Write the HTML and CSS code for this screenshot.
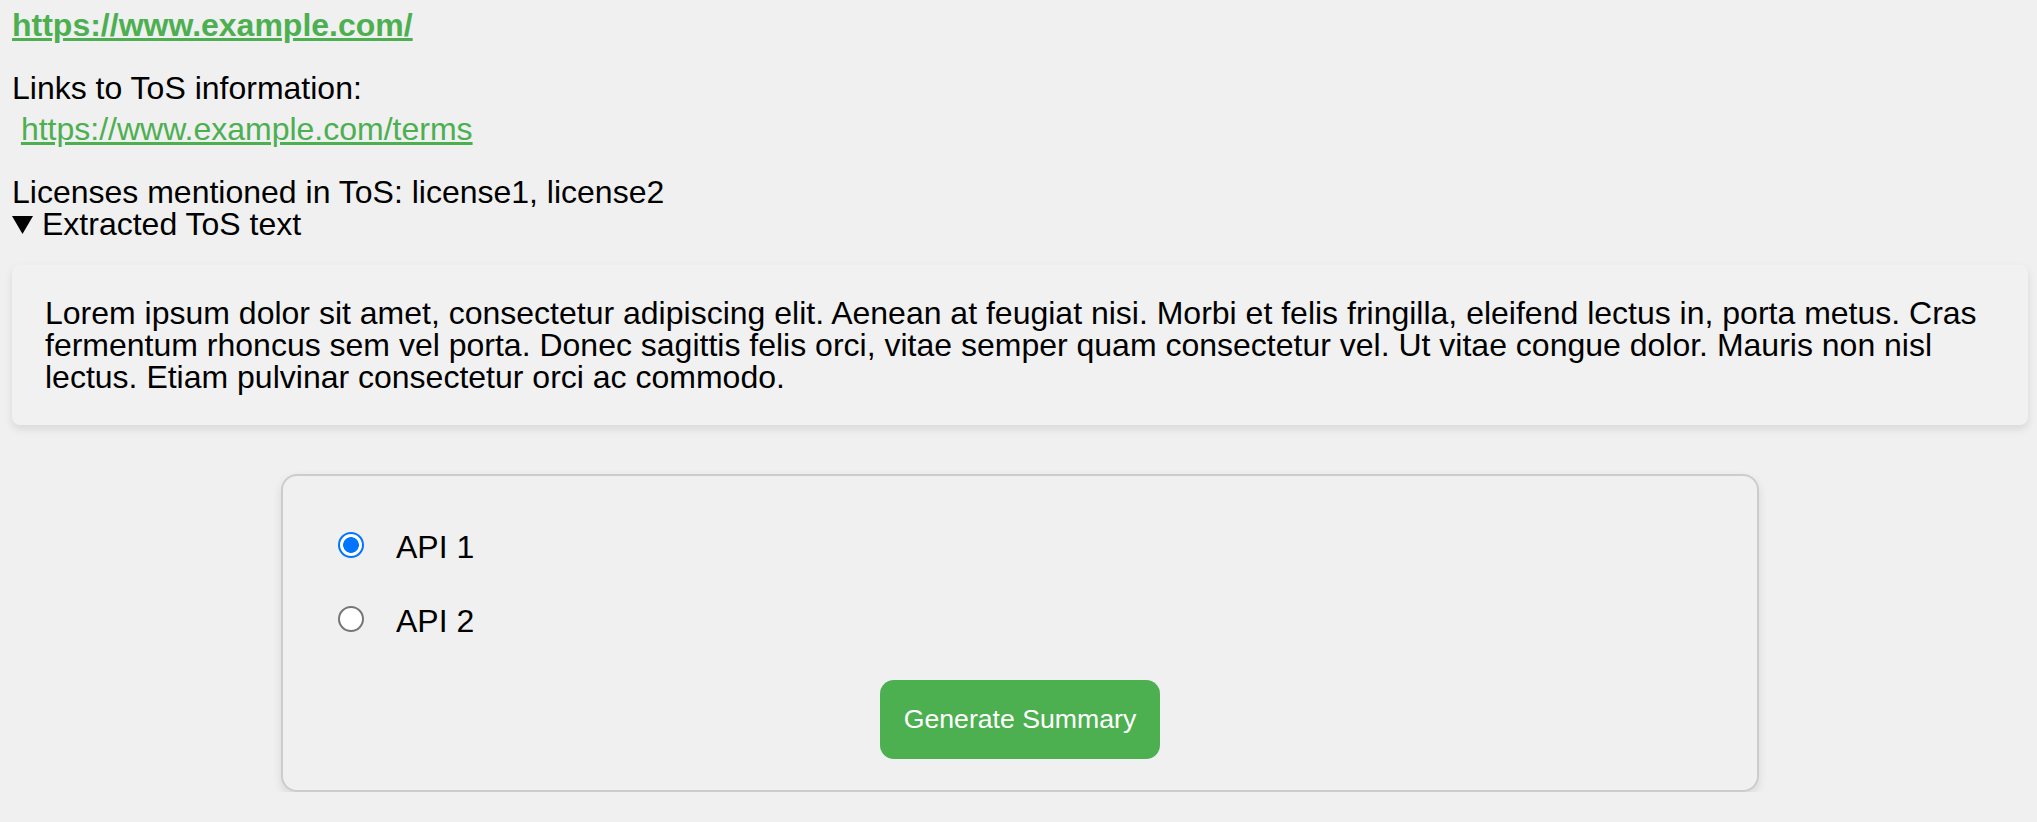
FILE: index.html
```html
<!DOCTYPE html>
<html lang="en">
<head>
<meta charset="utf-8">
<title>ToS Summary</title>
<link rel="stylesheet" href="styles.css">
</head>
<body>
<div class="page">
  <a class="site-link" href="#">https://www.example.com/</a>
  <div class="links-block">
    <div class="line">Links to ToS information:</div>
    <div class="line terms-line">&nbsp;<a class="terms-link" href="#">https://www.example.com/terms</a></div>
  </div>
  <div class="licenses">
    <div class="line">Licenses mentioned in ToS: license1, license2</div>
    <div class="line summary"><svg class="marker" width="21" height="18" viewBox="0 0 21 18"><polygon points="0,0 21,0 10.5,18" fill="#000"/></svg><span>Extracted ToS text</span></div>
  </div>
  <div class="tos-box">Lorem ipsum dolor sit amet, consectetur adipiscing elit. Aenean at feugiat nisi. Morbi et felis fringilla, eleifend lectus in, porta metus. Cras fermentum rhoncus sem vel porta. Donec sagittis felis orci, vitae semper quam consectetur vel. Ut vitae congue dolor. Mauris non nisl lectus. Etiam pulvinar consectetur orci ac commodo.</div>
  <form class="card">
    <label class="option"><input class="radio" type="radio" name="api" checked><span class="option-text">API 1</span></label>
    <label class="option"><input class="radio" type="radio" name="api"><span class="option-text">API 2</span></label>
    <div class="actions"><button class="generate" type="button">Generate Summary</button></div>
  </form>
</div>
</body>
</html>
```
FILE: styles.css
```css
html, body {
  margin: 0;
  background: #f0f0f0;
}
body {
  font-family: "Liberation Sans", Arial, sans-serif;
  font-size: 32px;
  line-height: 32px;
  color: #000;
}
.page {
  padding: 9px 9px 0 12px;
}
.site-link {
  display: block;
  font-weight: bold;
  color: #4caf50;
  text-decoration: underline;
}
.links-block {
  margin-top: 31px;
}
.terms-line {
  margin-top: 9px;
}
.terms-link {
  color: #4caf50;
  text-decoration: underline;
}
.licenses {
  margin-top: 31px;
}
.summary {
  display: flex;
  align-items: center;
}
.marker {
  display: block;
  margin-right: 9px;
  margin-top: 2px;
}
.tos-box {
  margin-top: 25px;
  padding: 32px 33px 32px 33px;
  background: #f1f1f1;
  border-radius: 8px;
  box-shadow: 0 4px 8px rgba(0, 0, 0, 0.1);
}
.card {
  box-sizing: border-box;
  width: 1478px;
  margin: 49px auto 0;
  padding: 32px 40px 31px 55px;
  border: 2px solid #cccccc;
  border-radius: 16px;
  box-shadow: 0 4px 10px rgba(0, 0, 0, 0.1);
  display: flex;
  flex-direction: column;
}
.option {
  display: flex;
  align-items: center;
  height: 74px;
}
.radio {
  -webkit-appearance: none;
  appearance: none;
  box-sizing: border-box;
  width: 26px;
  height: 26px;
  margin: 0;
  border: 2px solid #767676;
  border-radius: 50%;
  background: #fff;
}
.radio:checked {
  border: 2.5px solid #0075ff;
  background: radial-gradient(circle, #0075ff 0, #0075ff 7.5px, #fff 8.2px);
}
.option-text {
  margin-left: 32px;
  padding-top: 3px;
}
.actions {
  margin-top: 24px;
  display: flex;
  justify-content: center;
  margin-left: -15px;
}
.generate {
  font-family: "Liberation Sans", Arial, sans-serif;
  font-size: 26.67px;
  line-height: 30.67px;
  padding: 24px 24px;
  border: none;
  border-radius: 14px;
  background: #4caf50;
  color: #fff;
}
```
